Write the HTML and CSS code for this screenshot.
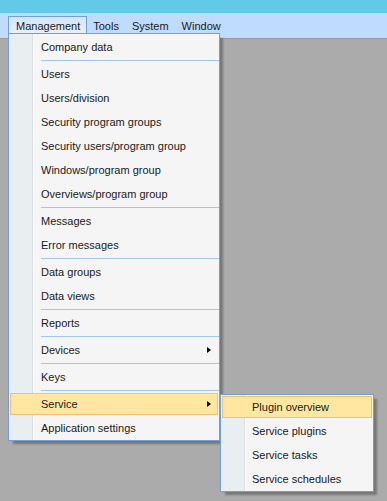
FILE: index.html
```html
<!DOCTYPE html>
<html lang="en">
<head>
    <meta charset="UTF-8">
    <meta name="viewport" content="width=device-width, initial-scale=1.0">
    <title>Management menu</title>
    <link rel="stylesheet" href="styles.css">
</head>
<body>

<div class="caption"></div>

<div class="menubar">
    <div class="menubar-item open">
        <span class="label">Management</span>

        <!-- Management dropdown -->
        <div class="dropdown main">
            <div class="item">Company data</div>
            <div class="sep"></div>
            <div class="item">Users</div>
            <div class="item">Users/division</div>
            <div class="item">Security program groups</div>
            <div class="item">Security users/program group</div>
            <div class="item">Windows/program group</div>
            <div class="item">Overviews/program group</div>
            <div class="sep"></div>
            <div class="item">Messages</div>
            <div class="item">Error messages</div>
            <div class="sep"></div>
            <div class="item">Data groups</div>
            <div class="item">Data views</div>
            <div class="sep"></div>
            <div class="item">Reports</div>
            <div class="sep"></div>
            <div class="item sub">Devices<span class="arrow"></span></div>
            <div class="sep"></div>
            <div class="item">Keys</div>
            <div class="sep"></div>
            <div class="item sub selected">Service<span class="arrow"></span>
                <!-- Service submenu -->
                <div class="dropdown submenu">
                    <div class="item selected">Plugin overview</div>
                    <div class="item">Service plugins</div>
                    <div class="item">Service tasks</div>
                    <div class="item">Service schedules</div>
                </div>
            </div>
            <div class="item">Application settings</div>
        </div>
    </div>
    <div class="menubar-item">Tools</div>
    <div class="menubar-item">System</div>
    <div class="menubar-item">Window</div>
</div>

<div class="desktop"></div>

</body>
</html>
```

FILE: styles.css
```css
html, body {
    height: 100%;
}
body {
    margin: 0;
    display: flex;
    flex-direction: column;
    font-family: "Liberation Sans", Arial, sans-serif;
    font-size: 11px;
    color: #000;
    background-color: #ababab;
}
.caption {
    height: 13px;
    background-color: #63c9e9;
}
.menubar {
    display: flex;
    height: 25px;
    padding-left: 8px;
    background-color: #bfdcfe;
    border-bottom: 1px solid #999;
}
.menubar-item {
    display: flex;
    align-items: center;
    height: 100%;
    padding: 0 7px 0 6px;
    color: #1a1a1a;
}
.menubar-item.open {
    position: relative;
    align-self: flex-start;
    margin-top: 3px;
    height: 17px;
    padding: 0 6px 4px 7px;
    border: 1px solid #729fd8;
    border-bottom: none;
    background: linear-gradient(#d4e5fa, #eef3f8);
    z-index: 2;
}
.menubar-item.open .label {
    position: relative;
    z-index: 3;
}
.desktop {
    flex: 1;
}
.dropdown {
    position: absolute;
    display: flex;
    flex-direction: column;
    background-color: #f5f5f5;
    border: 1px solid #729fd8;
    box-shadow: 4px 4px 2px -1px rgba(0, 0, 0, 0.3);
    background-image: linear-gradient(to right, #e9eef0 23px, #dcdfe1 23px, #dcdfe1 24px, #fbfbfb 24px, #fbfbfb 25px, transparent 25px);
}
.dropdown.main {
    left: -1px;
    top: 16px;
    width: 210px;
    padding-top: 1px;
    z-index: -1;
}
.item {
    position: relative;
    flex: none;
    height: 22px;
    margin: 1px;
    line-height: 20px;
    padding-left: 30px;
    white-space: nowrap;
    border: 1px solid transparent;
    box-sizing: border-box;
}
.item.selected {
    background-color: #ffe6a1;
    border-color: #f3c26e;
}
.sep {
    flex: none;
    height: 1px;
    margin: 1px 0 1px 32px;
    background-color: #a3c6f0;
}
.arrow {
    position: absolute;
    right: 6px;
    top: 7px;
    width: 0;
    height: 0;
    border-left: 4px solid #000;
    border-top: 3.5px solid transparent;
    border-bottom: 3.5px solid transparent;
}
.dropdown.submenu {
    left: 209px;
    top: 0;
    width: 152px;
}
.submenu .item {
    padding-left: 29px;
}
```
